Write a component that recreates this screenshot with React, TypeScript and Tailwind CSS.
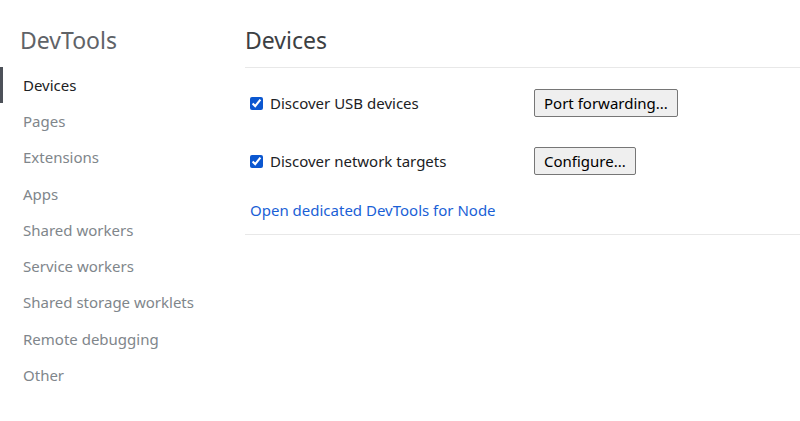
import { useState } from 'react';

const NAV = [
  'Devices',
  'Pages',
  'Extensions',
  'Apps',
  'Shared workers',
  'Service workers',
  'Shared storage worklets',
  'Remote debugging',
  'Other',
];

export default function App() {
  const [usb, setUsb] = useState(true);
  const [net, setNet] = useState(true);

  return (
    <div className="flex h-[421px] w-[800px] bg-white font-['Noto_Sans',sans-serif] overflow-hidden">
      <aside className="w-[245px] shrink-0">
        <h1 className="pl-5 pt-[25px] text-[23px] leading-[30px] text-[#5f6368]">DevTools</h1>
        <ul className="mt-[12px]">
          {NAV.map((item, i) => (
            <li
              key={item}
              className={
                i === 0
                  ? 'h-[36.25px] flex items-center pl-[20px] border-l-[3px] border-[#4d5159] text-[15px] text-[#202124]'
                  : 'h-[36.25px] flex items-center pl-[23px] text-[15px] text-[#80868b]'
              }
            >
              {item}
            </li>
          ))}
        </ul>
      </aside>
      <main className="flex-1">
        <h2 className="pt-[25px] pb-[12px] text-[23px] leading-[30px] text-[#3c4043] border-b border-[#e8e8e8]">Devices</h2>
        <div className="border-b border-[#e8e8e8] pb-[12px]">
          <div className="flex items-center h-[28px] mt-[21px]">
            <label className="flex items-center w-[289px] pl-[5px] text-[15px] text-[#202124]">
              <input
                type="checkbox"
                checked={usb}
                onChange={e => setUsb(e.target.checked)}
                className="w-[13px] h-[13px] mr-[7px] accent-[#0b57d0]"
              />
              Discover USB devices
            </label>
            <button className="h-[28px] px-[9px] bg-[#efefef] border border-[#767676] rounded-[2px] text-[15px] text-[#000]">
              Port forwarding...
            </button>
          </div>
          <div className="flex items-center h-[28px] mt-[30px]">
            <label className="flex items-center w-[289px] pl-[5px] text-[15px] text-[#202124]">
              <input
                type="checkbox"
                checked={net}
                onChange={e => setNet(e.target.checked)}
                className="w-[13px] h-[13px] mr-[7px] accent-[#0b57d0]"
              />
              Discover network targets
            </label>
            <button className="h-[28px] px-[9px] bg-[#efefef] border border-[#767676] rounded-[2px] text-[15px] text-[#000]">
              Configure...
            </button>
          </div>
          <a href="#" className="block mt-[23px] pl-[5px] text-[15px] leading-[24px] text-[#1a5fd6]">
            Open dedicated DevTools for Node
          </a>
        </div>
      </main>
    </div>
  );
}
